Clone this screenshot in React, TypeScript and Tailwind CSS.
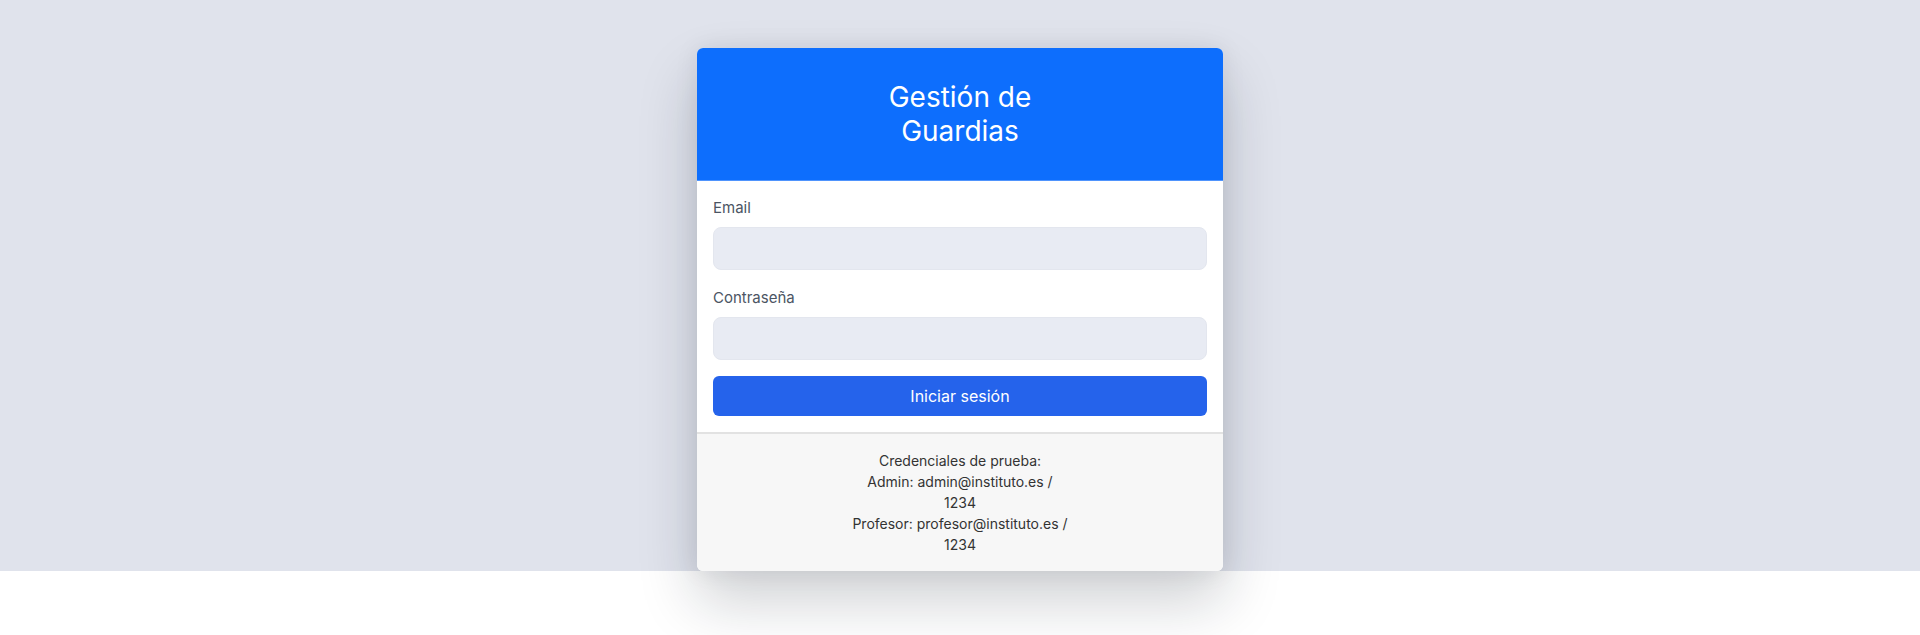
export default function App() {
  return (
    <div className="min-h-screen bg-white font-['Inter',sans-serif]">
      <div className="flex justify-center bg-[#e0e3ec] pt-12">
        <div className="relative z-10 w-[526px] overflow-hidden rounded-md bg-white shadow-[0_30px_60px_rgba(15,23,42,0.2),0_0_24px_rgba(15,23,42,0.08)]">
          <div className="border-b border-[#4f94fd] bg-[#0d6efd] py-8 text-center">
            <h1 className="text-[28px] leading-[34px] font-normal text-white">
              Gestión de
              <br />
              Guardias
            </h1>
          </div>

          <form className="px-4 pt-4 pb-4">
            <div className="mb-[17px]">
              <label className="mb-2 block text-[15px] leading-[22px] text-[#4b5563]">Email</label>
              <input
                type="email"
                className="block h-[43px] w-full rounded-lg border border-[#e3e6ee] bg-[#e8ebf3] px-3 outline-none"
              />
            </div>
            <div className="mb-4">
              <label className="mb-2 block text-[15px] leading-[22px] text-[#4b5563]">Contraseña</label>
              <input
                type="password"
                className="block h-[43px] w-full rounded-lg border border-[#e3e6ee] bg-[#e8ebf3] px-3 outline-none"
              />
            </div>
            <button
              type="button"
              className="block h-10 w-full rounded-md bg-[#2563eb] text-base text-white"
            >
              Iniciar sesión
            </button>
          </form>

          <div className="border-t-2 border-[#e2e2e2] bg-[#f7f7f7] py-4 text-center text-sm leading-[21px] text-[#333333]">
            Credenciales de prueba:
            <br />
            Admin: admin@instituto.es /
            <br />
            1234
            <br />
            Profesor: profesor@instituto.es /
            <br />
            1234
          </div>
        </div>
      </div>
    </div>
  )
}
